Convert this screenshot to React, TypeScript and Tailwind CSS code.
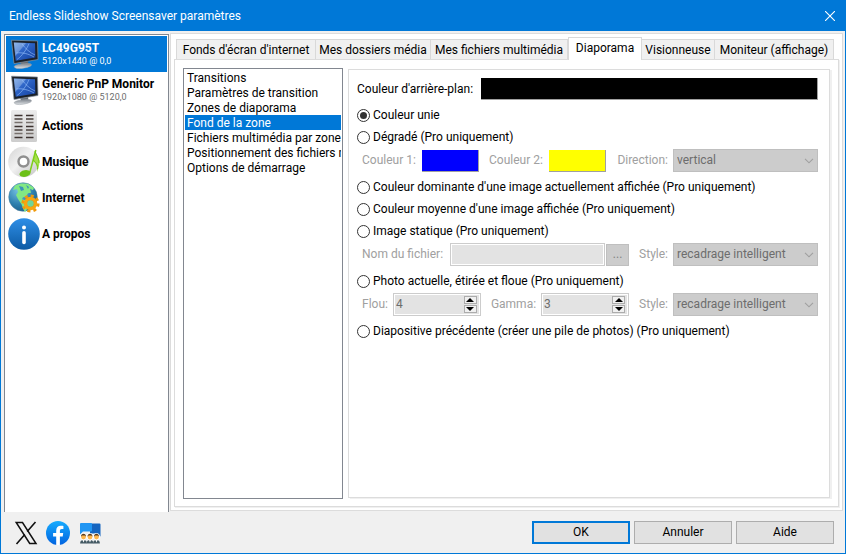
import React, { useState } from "react";

function MonitorIcon() {
  return (
    <svg viewBox="0 0 32 32" className="size-8" aria-hidden="true">
      <defs>
        <linearGradient id="screen" x1="0" y1="0" x2="1" y2="1">
          <stop offset="0" stopColor="#6f9fe0" />
          <stop offset="0.4" stopColor="#2f66c8" />
          <stop offset="1" stopColor="#123f9e" />
        </linearGradient>
        <linearGradient id="foot" x1="0" y1="0" x2="0" y2="1">
          <stop offset="0" stopColor="#7d848c" />
          <stop offset="1" stopColor="#dfe2e5" />
        </linearGradient>
      </defs>
      <path d="M12 24l8-1 .5 3.500-7 1z" fill="#646b73" />
      <path d="M6.500 28c2-1.800 13-3 16-2.200 1.600.6 1.300 1.800-.6 2.600-4 1.700-10 2.600-13 2-2-.4-3.200-1.300-2.400-2.400z" fill="url(#foot)" stroke="#9da2a8" strokeWidth=".5" />
      <path d="M3.500 2.200L29.500 3 30 21.500 6 25.600z" fill="#1b2129" stroke="#8a949f" strokeWidth=".7" />
      <path d="M5.800 4.500L27 5.200 27.400 19.500 7.700 22.800z" fill="url(#screen)" />
      <path d="M5.800 4.500L18 4.900 7.400 18z" fill="#c8dcf6" opacity=".35" />
      <path d="M9 21.500C14 18 19 11 21 5.500M14 6c3 4 8 9 13 11M8 15c6-1 13 1 18 4" stroke="#9dc6ff" strokeWidth=".9" fill="none" opacity=".65" />
    </svg>
  );
}

function ActionsIcon() {
  const rows = [5.5, 9, 12.500, 16.500, 20, 23.500, 27.500];
  return (
    <svg viewBox="0 0 32 32" className="size-8" aria-hidden="true">
      <defs>
        <linearGradient id="sheet" x1="0" y1="0" x2="0" y2="1">
          <stop offset="0" stopColor="#ececec" />
          <stop offset="1" stopColor="#cdcdcd" />
        </linearGradient>
      </defs>
      <rect x="3" y="0" width="26" height="32" rx="1.500" fill="url(#sheet)" />
      {rows.map((y, i) => (
        <path key={y} d={`M6.500 ${y}h8M18 ${y}h7.500`} stroke={i % 3 === 0 ? "#3d3330" : i % 3 === 1 ? "#4a403c" : "#77706c"} strokeWidth="1.300" />
      ))}
    </svg>
  );
}

function MusicIcon() {
  return (
    <svg viewBox="0 0 32 32" className="size-8" aria-hidden="true">
      <defs>
        <linearGradient id="disc" x1="0" y1="0" x2="1" y2="1">
          <stop offset="0" stopColor="#d4d4d4" />
          <stop offset="0.45" stopColor="#f2f2f2" />
          <stop offset="0.6" stopColor="#e2e2e2" />
          <stop offset="1" stopColor="#c6c6c6" />
        </linearGradient>
      </defs>
      <circle cx="15.500" cy="16" r="15.300" fill="url(#disc)" />
      <circle cx="15.500" cy="15.500" r="5" fill="#fff" stroke="#8f8f8f" strokeWidth="2.400" />
      <path d="M27 4.500c.6 4.500 5.500 8 4.400 12.500-.4 4-1.400 7-2.400 9 .4-5.500-.6-8.500-4-11z" fill="#a5e04a" />
      <path d="M27.800 4L21.800 26.500" stroke="#7fce1c" strokeWidth="1.500" />
      <path d="M27 5c1 4 4.500 8 4 12M25 14c3 2 5 5 4.500 9" stroke="#74c816" strokeWidth="1" fill="none" />
      <ellipse cx="17" cy="27.500" rx="5.600" ry="3.300" fill="#6cc018" transform="rotate(-10 17 27.500)" />
    </svg>
  );
}

function InternetIcon() {
  return (
    <svg viewBox="0 0 32 32" className="size-8" aria-hidden="true">
      <defs>
        <radialGradient id="globe" cx=".35" cy=".25" r=".85">
          <stop offset="0" stopColor="#79c4e6" />
          <stop offset="0.6" stopColor="#2d7fae" />
          <stop offset="1" stopColor="#185a85" />
        </radialGradient>
      </defs>
      <circle cx="15" cy="15" r="14.300" fill="url(#globe)" stroke="#4d7f9d" strokeWidth=".5" />
      <path d="M7 3.500l6-2 7 .3 6 4-1 2.500-3-1.500 1 4-3 .5-2 3.500-3 .5-1 2 4 1 2 3-1 6-2 3-2-4-1.500-4L10 17l-2-4 2-3-1-3-4 1z" fill="#82e884" />
      <path d="M11 4l4 1 1 3-3 1zM18 3l3 2-1 2z" fill="#3c94b8" />
      <circle cx="22.500" cy="21.500" r="3.500" fill="#6fd69a" />
      <circle cx="22.500" cy="21.500" r="5" fill="none" stroke="#f6a511" strokeWidth="3.600" />
      <circle cx="22.500" cy="21.500" r="7.800" fill="none" stroke="#f09a0c" strokeWidth="2.600" strokeDasharray="3.060 3.060" />
    </svg>
  );
}

function InfoIcon() {
  return (
    <svg viewBox="0 0 32 32" className="size-8" aria-hidden="true">
      <defs>
        <linearGradient id="info" x1="0" y1="0" x2="0" y2="1">
          <stop offset="0" stopColor="#2e8ee6" />
          <stop offset="1" stopColor="#0c5aa3" />
        </linearGradient>
      </defs>
      <circle cx="16" cy="16" r="15.800" fill="url(#info)" />
      <circle cx="16" cy="9.500" r="2" fill="#fff" />
      <path d="M16 14.800v9.700" stroke="#fff" strokeWidth="3.600" strokeLinecap="round" />
    </svg>
  );
}

function XLogo() {
  return (
    <svg viewBox="0 0 24 24" className="size-6" aria-hidden="true">
      <path d="M2.200 1.500h6.300l13.500 21h-6.300z" fill="#f0f0f0" stroke="#111" strokeWidth="1.500" />
      <path d="M21.500 1L13.200 10.600M10.800 13.400L2.500 23" stroke="#111" strokeWidth="1.600" />
    </svg>
  );
}

function FacebookLogo() {
  return (
    <svg viewBox="0 0 24 24" className="size-6" aria-hidden="true">
      <defs>
        <linearGradient id="fb" x1="0" y1="0" x2="0" y2="1">
          <stop offset="0" stopColor="#18acfe" />
          <stop offset="1" stopColor="#0163e0" />
        </linearGradient>
      </defs>
      <circle cx="12" cy="12" r="12" fill="url(#fb)" />
      <path d="M16.700 15.500l.5-3.500h-3.300V9.800c0-1 .5-1.900 2-1.900h1.500v-3s-1.400-.2-2.700-.2c-2.700 0-4.500 1.700-4.500 4.700V12H7.100v3.500h3.100v8.400a12 12 0 0 0 3.700 0v-8.400z" fill="#fff" />
    </svg>
  );
}

function ForumIcon() {
  return (
    <svg viewBox="0 0 24 24" className="size-6" aria-hidden="true">
      <path d="M12 2.500h9.500a1 1 0 0 1 1 1v12l-3-3H12z" fill="#1565c0" />
      <path d="M3 2h10a1 1 0 0 1 1 1v6.500a1 1 0 0 1-1 1H5l-3 3V3a1 1 0 0 1 1-1z" fill="#2196f3" />
      {[5.500, 12, 18.500].map((x) => (
        <g key={x}>
          <circle cx={x} cy="15.600" r="3.400" fill="#fff" />
          <path d={`M${x - 3.400} 22.500c0-2.600 1.400-3.500 3.400-3.500s3.400.9 3.400 3.500z`} fill="#455a64" />
          <path d={`M${x - 1.300} 18.500h2.600l-1.300 3z`} fill="#fff" />
          <circle cx={x} cy="16" r="2.400" fill="#ffb74d" />
          <path d={`M${x - 2.500} 15.800c-.3-4 5.300-4 5 0l-1-1.300h-3z`} fill="#5a3a1c" />
        </g>
      ))}
    </svg>
  );
}

const sections = [
  { title: "LC49G95T", detail: "5120x1440 @ 0,0", icon: <MonitorIcon /> },
  { title: "Generic PnP Monitor", detail: "1920x1080 @ 5120,0", icon: <MonitorIcon /> },
  { title: "Actions", icon: <ActionsIcon /> },
  { title: "Musique", icon: <MusicIcon /> },
  { title: "Internet", icon: <InternetIcon /> },
  { title: "A propos", icon: <InfoIcon /> },
];

const tabs = [
  { label: "Fonds d'écran d'internet", width: "w-[140px]" },
  { label: "Mes dossiers média", width: "w-[115px]" },
  { label: "Mes fichiers multimédia", width: "w-[137px]" },
  { label: "Diaporama", width: "w-[74px]" },
  { label: "Visionneuse", width: "w-[73px]" },
  { label: "Moniteur (affichage)", width: "w-[119px]" },
];

const topics = [
  "Transitions",
  "Paramètres de transition",
  "Zones de diaporama",
  "Fond de la zone",
  "Fichiers multimédia par zone",
  "Positionnement des fichiers multimédia",
  "Options de démarrage",
];

function Swatch({ id, color, className }: { id: string; color: string; className: string }) {
  return (
    <input
      id={id}
      type="color"
      defaultValue={color}
      className={`block h-[22px] appearance-none self-end border-r border-b border-[#a0a0a0] p-0 [&::-webkit-color-swatch]:rounded-none [&::-webkit-color-swatch]:border-0 [&::-webkit-color-swatch-wrapper]:p-0 ${className}`}
    />
  );
}

function Choice({ label, value, selected, onSelect }: { label: string; value: string; selected: string; onSelect: (v: string) => void }) {
  return (
    <label className="flex h-[22px] items-center gap-[3px] whitespace-nowrap">
      <input
        type="radio"
        name="background"
        value={value}
        checked={selected === value}
        onChange={() => onSelect(value)}
        className="grid size-[13px] shrink-0 appearance-none place-items-center rounded-full border border-[#333] bg-white checked:before:size-[7px] checked:before:rounded-full checked:before:bg-[#333]"
      />
      {label}
    </label>
  );
}

function DisabledSelect({ id, value }: { id: string; value: string }) {
  return (
    <div className="relative w-[145px] shrink-0">
      <select id={id} disabled className="block h-[23px] w-full appearance-none border border-[#bfbfbf] bg-[#ccc] px-[3px] text-[#6d6d6d] opacity-100">
        <option>{value}</option>
      </select>
      <svg viewBox="0 0 10 6" className="pointer-events-none absolute top-[9px] right-1 h-1.5 w-2.5" aria-hidden="true">
        <path d="M1 .8l4 4 4-4" fill="none" stroke="#a0a0a0" strokeWidth="1.100" />
      </svg>
    </div>
  );
}

function Spinner({ id, value }: { id: string; value: string }) {
  return (
    <div className="flex h-[23px] w-[88px] shrink-0 items-center border border-[#ccc] bg-white p-px">
      <input id={id} disabled defaultValue={value} className="h-full w-full min-w-0 flex-1 bg-[#e3e3e3] px-px pb-0.5 text-[#6d6d6d]" />
      <div className="flex h-full flex-col justify-center gap-px bg-[#e3e3e3] pr-0.5">
        <button type="button" aria-label="Augmenter" className="grid h-2 w-[13px] place-items-center border border-[#acacac] bg-[#f0f0f0]">
          <svg viewBox="0 0 8 4" className="h-1 w-2"><path d="M0 4l4-4 4 4z" /></svg>
        </button>
        <button type="button" aria-label="Diminuer" className="grid h-2 w-[13px] place-items-center border border-[#acacac] bg-[#f0f0f0]">
          <svg viewBox="0 0 8 4" className="h-1 w-2"><path d="M0 0l4 4 4-4z" /></svg>
        </button>
      </div>
    </div>
  );
}

const subRow = "mt-px mb-1 flex h-[23px] items-center pl-[5px] text-[#a0a0a0] whitespace-nowrap";

export default function App() {
  const [section, setSection] = useState(0);
  const [tab, setTab] = useState(3);
  const [topic, setTopic] = useState(3);
  const [background, setBackground] = useState("solid");

  return (
    <div className="flex min-h-screen flex-col border border-[#0078d7] bg-[#f0f0f0] font-[Roboto,'Noto_Sans',sans-serif] text-[12px] leading-[15px] text-black">
      <header className="flex h-[30px] shrink-0 items-center justify-between bg-[#0078d7] pr-2.5 pl-2 text-white">
        <h1>Endless Slideshow Screensaver paramètres</h1>
        <button type="button" aria-label="Fermer">
          <svg viewBox="0 0 10 10" className="size-2.5"><path d="M0 0l10 10M10 0L0 10" stroke="#fff" strokeWidth="1.100" /></svg>
        </button>
      </header>

      <main className="flex min-h-0 flex-1 gap-px pr-0.5 pl-[3px]">
        <nav className="mt-[3px] w-[165px] shrink-0 border border-b-0 border-[#828790] bg-white p-px">
          {sections.map((s, i) => (
            <button
              key={s.title}
              type="button"
              onClick={() => setSection(i)}
              className={`flex h-9 w-full items-center gap-0.5 pl-0.5 text-left whitespace-nowrap ${i === section ? "bg-[#0078d7] text-white" : ""}`}
            >
              {s.icon}
              <span className="flex flex-col">
                <span className="font-bold">{s.title}</span>
                {s.detail && <span className={`text-[9px] leading-[11px] ${i === section ? "" : "text-[#6d6d6d]"}`}>{s.detail}</span>}
              </span>
            </button>
          ))}
        </nav>

        <div className="mt-0.5 mb-px flex min-w-0 flex-1 flex-col border border-[#dcdcdc] bg-white p-[3px]">
          <div role="tablist" className="flex h-[22px] items-end pl-0.5">
            {tabs.map((t, i) => (
              <button
                key={t.label}
                type="button"
                role="tab"
                aria-selected={i === tab}
                onClick={() => setTab(i)}
                className={`flex items-center justify-center border border-[#d9d9d9] whitespace-nowrap ${t.width} ${
                  i === tab ? "z-10 -mb-px h-[23px] border-b-0 bg-white pb-0.5" : "h-5 border-b-0 bg-[#f0f0f0] pt-px"
                } ${i === 0 || i === tab ? "" : "border-l-0"}`}
              >
                {t.label}
              </button>
            ))}
          </div>

          <div role="tabpanel" className="flex min-h-0 flex-1 gap-[5px] border border-[#dcdcdc] px-2 pt-2 pb-[7px] shadow-[1px_1px_0_#f0f0f0]">
            <ul className="w-[160px] shrink-0 overflow-hidden border border-[#828790] p-px">
              {topics.map((t, i) => (
                <li key={t}>
                  <button
                    type="button"
                    onClick={() => setTopic(i)}
                    className={`block h-[15px] w-full overflow-hidden pl-0.5 text-left leading-[17px] whitespace-nowrap ${i === topic ? "bg-[#0078d7] text-white" : ""}`}
                  >
                    {t}
                  </button>
                </li>
              ))}
            </ul>

            <section className="my-px min-w-0 flex-1 border border-[#dcdcdc] pt-2 pr-[11px] pl-2 shadow-[2px_1px_0_#f0f0f0]">
              <div className="mb-1 flex items-center gap-2 whitespace-nowrap">
                <label htmlFor="bg-color">Couleur d'arrière-plan:</label>
                <Swatch id="bg-color" color="#000000" className="min-w-0 flex-1" />
              </div>

              <Choice label="Couleur unie" value="solid" selected={background} onSelect={setBackground} />
              <Choice label="Dégradé (Pro uniquement)" value="gradient" selected={background} onSelect={setBackground} />
              <div className={subRow}>
                <label htmlFor="color-1" className="w-[60px]">Couleur 1:</label>
                <Swatch id="color-1" color="#0000ff" className="w-[57px]" />
                <label htmlFor="color-2" className="ml-2.5 w-[60px]">Couleur 2:</label>
                <Swatch id="color-2" color="#ffff00" className="w-[57px]" />
                <label htmlFor="direction" className="ml-auto pr-[5px]">Direction:</label>
                <DisabledSelect id="direction" value="vertical" />
              </div>

              <Choice label="Couleur dominante d'une image actuellement affichée (Pro uniquement)" value="dominant" selected={background} onSelect={setBackground} />
              <Choice label="Couleur moyenne d'une image affichée (Pro uniquement)" value="average" selected={background} onSelect={setBackground} />
              <Choice label="Image statique (Pro uniquement)" value="static" selected={background} onSelect={setBackground} />
              <div className={subRow}>
                <label htmlFor="file" className="pr-[7px]">Nom du fichier:</label>
                <div className="h-[23px] min-w-0 flex-1 border border-[#ccc] bg-white p-px">
                  <input id="file" disabled className="block h-full w-full bg-[#e3e3e3]" />
                </div>
                <button type="button" disabled aria-label="Parcourir" className="ml-px h-[22px] w-[23px] border border-[#bfbfbf] bg-[#ccc] text-[#838383]">...</button>
                <label htmlFor="static-style" className="ml-2.5 pr-[5px]">Style:</label>
                <DisabledSelect id="static-style" value="recadrage intelligent" />
              </div>

              <Choice label="Photo actuelle, étirée et floue (Pro uniquement)" value="blurred" selected={background} onSelect={setBackground} />
              <div className={subRow}>
                <label htmlFor="blur" className="pr-[5px]">Flou:</label>
                <Spinner id="blur" value="4" />
                <label htmlFor="gamma" className="ml-auto pr-[5px]">Gamma:</label>
                <Spinner id="gamma" value="3" />
                <label htmlFor="blur-style" className="ml-2.5 pr-[5px]">Style:</label>
                <DisabledSelect id="blur-style" value="recadrage intelligent" />
              </div>

              <Choice label="Diapositive précédente (créer une pile de photos) (Pro uniquement)" value="previous" selected={background} onSelect={setBackground} />
            </section>
          </div>
        </div>
      </main>

      <footer className="flex h-[41px] shrink-0 items-center justify-between pr-[11px] pl-[13px]">
        <div className="flex gap-2">
          <a href="#x" aria-label="X"><XLogo /></a>
          <a href="#facebook" aria-label="Facebook"><FacebookLogo /></a>
          <a href="#forum" aria-label="Forum"><ForumIcon /></a>
        </div>
        <div className="flex gap-1">
          <button type="button" className="h-[23px] w-[98px] border-2 border-[#0078d7] bg-[#e1e1e1]">OK</button>
          <button type="button" className="h-[23px] w-[98px] border border-[#adadad] bg-[#e1e1e1]">Annuler</button>
          <button type="button" className="h-[23px] w-[98px] border border-[#adadad] bg-[#e1e1e1]">Aide</button>
        </div>
      </footer>
    </div>
  );
}
